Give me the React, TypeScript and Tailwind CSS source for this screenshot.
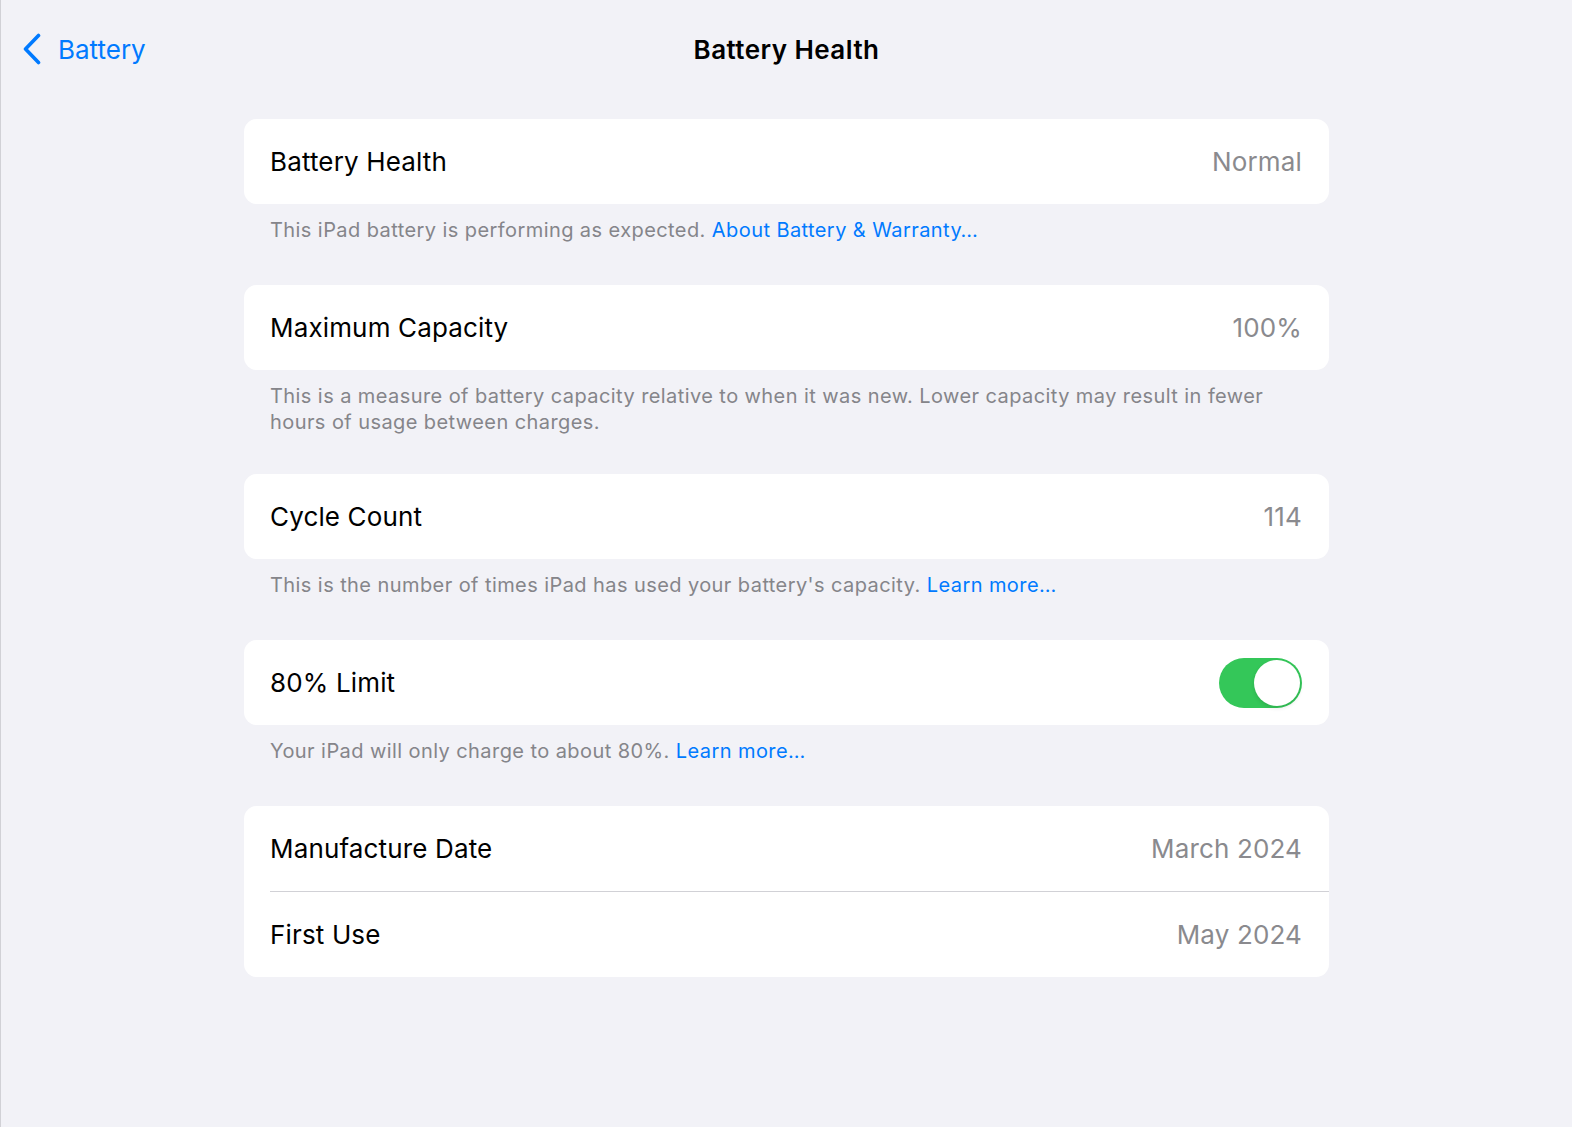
import React, { useState } from 'react';

type Row = { label: string; value?: string };

const Card = ({ children }: { children: React.ReactNode }) => (
  <div className="overflow-hidden rounded-[13px] bg-white">{children}</div>
);

const RowItem = ({ label, value, children }: Row & { children?: React.ReactNode }) => (
  <div className="flex h-[85px] items-center justify-between pl-[26px] pr-[27px]">
    <span className="text-[26px] tracking-[0.15px] text-black">{label}</span>
    {value !== undefined ? (
      <span className="text-[26px] tracking-[0.15px] text-[#8a8a8e]">{value}</span>
    ) : (
      children
    )}
  </div>
);

const Footer = ({ children, className }: { children: React.ReactNode; className: string }) => (
  <p className={`pl-[26px] pt-[13px] text-[20px] leading-[26px] tracking-[0.42px] text-[#85858a] ${className}`}>
    {children}
  </p>
);

const Link = ({ children }: { children: React.ReactNode }) => (
  <span className="text-[#007aff]">{children}</span>
);

const Toggle = ({ on, onChange }: { on: boolean; onChange: () => void }) => (
  <button
    onClick={onChange}
    className={`relative h-[50px] w-[83px] rounded-full transition-colors ${on ? 'bg-[#34c759]' : 'bg-[#e9e9ea]'}`}
  >
    <span
      className={`absolute top-[2px] h-[46px] w-[46px] rounded-full bg-white shadow-[0_2px_4px_rgba(0,0,0,0.12)] transition-all ${on ? 'left-[35px]' : 'left-[2px]'}`}
    />
  </button>
);

export default function App() {
  const [limit, setLimit] = useState(true);

  return (
    <div className="min-h-screen border-l border-[#d1d1d6] bg-[#f2f2f7] font-['Inter','Liberation_Sans',sans-serif] antialiased">
      <header className="grid h-[98px] grid-cols-[1fr_auto_1fr] items-center">
        <button className="flex items-center gap-[16px] pl-[21px] text-[#007aff]">
          <svg width="20" height="32" viewBox="0 0 20 32" fill="none">
            <path
              d="M16.5 2.5 L3.5 16 L16.5 29.5"
              stroke="#007aff"
              strokeWidth="3.6"
              strokeLinecap="round"
              strokeLinejoin="round"
            />
          </svg>
          <span className="text-[26px]">Battery</span>
        </button>
        <h1 className="text-[26px] font-semibold tracking-[0.45px] text-black">Battery Health</h1>
        <div />
      </header>

      <main className="mx-auto w-[1085px] pt-[21px] pb-10">
        <Card>
          <RowItem label="Battery Health" value="Normal" />
        </Card>
        <Footer className="mb-[42px]">
          This iPad battery is performing as expected. <Link>About Battery &amp; Warranty…</Link>
        </Footer>

        <Card>
          <RowItem label="Maximum Capacity" value="100%" />
        </Card>
        <Footer className="mb-[39px] pr-[60px]">
          This is a measure of battery capacity relative to when it was new. Lower capacity may result in fewer hours of
          usage between charges.
        </Footer>

        <Card>
          <RowItem label="Cycle Count" value="114" />
        </Card>
        <Footer className="mb-[42px]">
          This is the number of times iPad has used your battery's capacity. <Link>Learn more…</Link>
        </Footer>

        <Card>
          <RowItem label="80% Limit">
            <Toggle on={limit} onChange={() => setLimit(!limit)} />
          </RowItem>
        </Card>
        <Footer className="mb-[42px]">
          Your iPad will only charge to about 80%. <Link>Learn more…</Link>
        </Footer>

        <Card>
          <RowItem label="Manufacture Date" value="March 2024" />
          <div className="ml-[26px] h-px bg-[#d1d1d6]" />
          <RowItem label="First Use" value="May 2024" />
        </Card>
      </main>
    </div>
  );
}
